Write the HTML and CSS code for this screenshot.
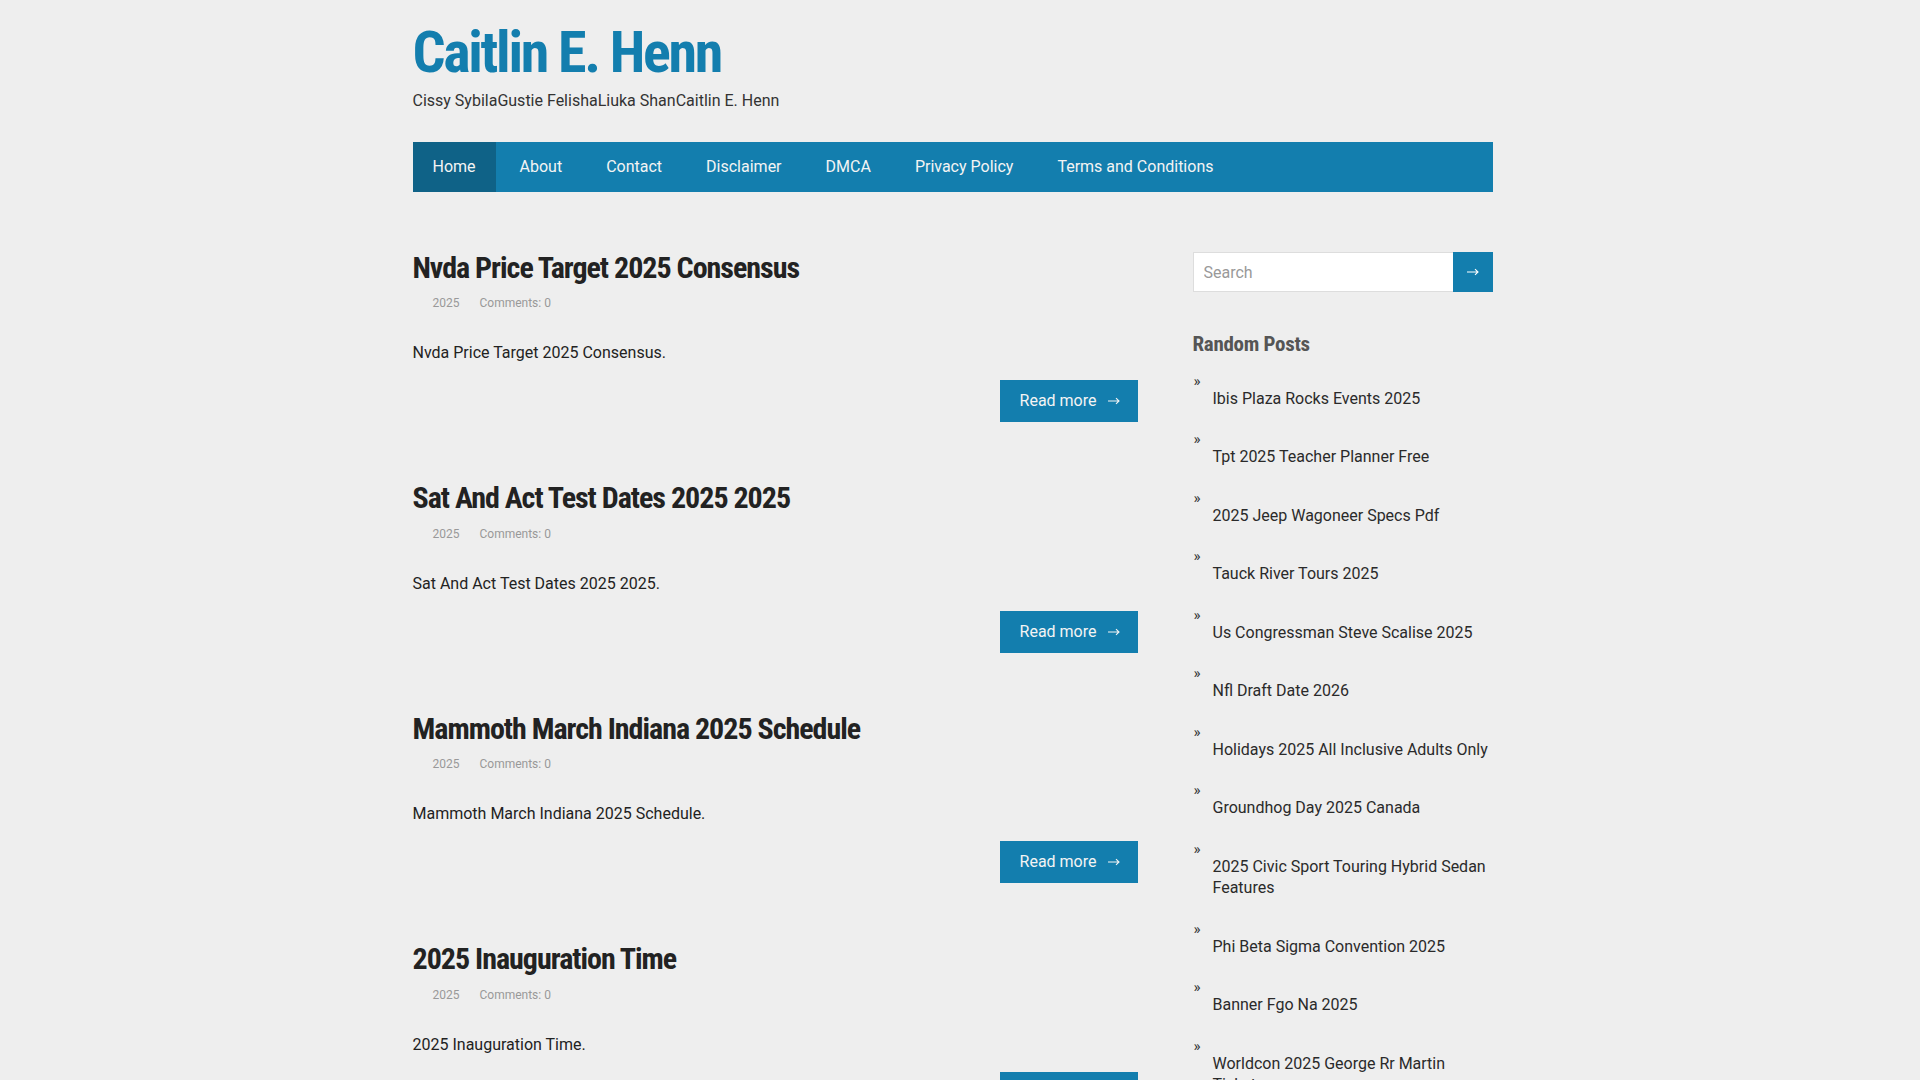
FILE: index.html
```html
<!DOCTYPE html>
<html lang="en">
<head>
<meta charset="utf-8">
<title>Caitlin E. Henn</title>
<link rel="stylesheet" href="styles.css">
</head>
<body>
<div class="wrap">
  <header class="site-header">
    <div class="site-title"><a href="#">Caitlin E. Henn</a></div>
    <div class="site-desc">Cissy SybilaGustie FelishaLiuka ShanCaitlin E. Henn</div>
  </header>
  <nav class="main-nav">
    <ul>
      <li class="active"><a href="#">Home</a></li>
      <li><a href="#">About</a></li>
      <li><a href="#">Contact</a></li>
      <li><a href="#">Disclaimer</a></li>
      <li><a href="#">DMCA</a></li>
      <li><a href="#">Privacy Policy</a></li>
      <li><a href="#">Terms and Conditions</a></li>
    </ul>
  </nav>
  <div class="content">
    <main class="posts">
      <article class="post">
        <h2 class="post-title"><a href="#">Nvda Price Target 2025 Consensus</a></h2>
        <div class="meta"><span class="date">2025</span><span class="comments">Comments: 0</span></div>
        <p class="excerpt">Nvda Price Target 2025 Consensus.</p>
        <div class="more-row"><a class="more" href="#">Read more<svg class="arrow" width="12" height="8" viewBox="0 0 12 8"><path d="M0 4H11M8 1.2L11 4L8 6.8" fill="none" stroke="currentColor" stroke-width="1.1"/></svg></a></div>
      </article>
      <article class="post">
        <h2 class="post-title"><a href="#">Sat And Act Test Dates 2025 2025</a></h2>
        <div class="meta"><span class="date">2025</span><span class="comments">Comments: 0</span></div>
        <p class="excerpt">Sat And Act Test Dates 2025 2025.</p>
        <div class="more-row"><a class="more" href="#">Read more<svg class="arrow" width="12" height="8" viewBox="0 0 12 8"><path d="M0 4H11M8 1.2L11 4L8 6.8" fill="none" stroke="currentColor" stroke-width="1.1"/></svg></a></div>
      </article>
      <article class="post">
        <h2 class="post-title"><a href="#">Mammoth March Indiana 2025 Schedule</a></h2>
        <div class="meta"><span class="date">2025</span><span class="comments">Comments: 0</span></div>
        <p class="excerpt">Mammoth March Indiana 2025 Schedule.</p>
        <div class="more-row"><a class="more" href="#">Read more<svg class="arrow" width="12" height="8" viewBox="0 0 12 8"><path d="M0 4H11M8 1.2L11 4L8 6.8" fill="none" stroke="currentColor" stroke-width="1.1"/></svg></a></div>
      </article>
      <article class="post">
        <h2 class="post-title"><a href="#">2025 Inauguration Time</a></h2>
        <div class="meta"><span class="date">2025</span><span class="comments">Comments: 0</span></div>
        <p class="excerpt">2025 Inauguration Time.</p>
        <div class="more-row"><a class="more" href="#">Read more<svg class="arrow" width="12" height="8" viewBox="0 0 12 8"><path d="M0 4H11M8 1.2L11 4L8 6.8" fill="none" stroke="currentColor" stroke-width="1.1"/></svg></a></div>
      </article>
      <article class="post">
        <h2 class="post-title"><a href="#">Nfl Draft Date 2026</a></h2>
        <div class="meta"><span class="date">2025</span><span class="comments">Comments: 0</span></div>
        <p class="excerpt">Nfl Draft Date 2026.</p>
        <div class="more-row"><a class="more" href="#">Read more<svg class="arrow" width="12" height="8" viewBox="0 0 12 8"><path d="M0 4H11M8 1.2L11 4L8 6.8" fill="none" stroke="currentColor" stroke-width="1.1"/></svg></a></div>
      </article>
      <article class="post">
        <h2 class="post-title"><a href="#">Groundhog Day 2025 Canada</a></h2>
        <div class="meta"><span class="date">2025</span><span class="comments">Comments: 0</span></div>
        <p class="excerpt">Groundhog Day 2025 Canada.</p>
        <div class="more-row"><a class="more" href="#">Read more<svg class="arrow" width="12" height="8" viewBox="0 0 12 8"><path d="M0 4H11M8 1.2L11 4L8 6.8" fill="none" stroke="currentColor" stroke-width="1.1"/></svg></a></div>
      </article>
    </main>
    <aside class="sidebar">
      <form class="search">
        <input class="search-input" type="text" placeholder="Search">
        <button class="search-btn" type="button"><svg width="12" height="8" viewBox="0 0 12 8"><path d="M0 4H11M8 1.2L11 4L8 6.8" fill="none" stroke="currentColor" stroke-width="1.1"/></svg></button>
      </form>
      <h3 class="widget-title">Random Posts</h3>
      <ul class="random">
        <li><a href="#">Ibis Plaza Rocks Events 2025</a></li>
        <li><a href="#">Tpt 2025 Teacher Planner Free</a></li>
        <li><a href="#">2025 Jeep Wagoneer Specs Pdf</a></li>
        <li><a href="#">Tauck River Tours 2025</a></li>
        <li><a href="#">Us Congressman Steve Scalise 2025</a></li>
        <li><a href="#">Nfl Draft Date 2026</a></li>
        <li><a href="#">Holidays 2025 All Inclusive Adults Only</a></li>
        <li><a href="#">Groundhog Day 2025 Canada</a></li>
        <li><a href="#">2025 Civic Sport Touring Hybrid Sedan Features</a></li>
        <li><a href="#">Phi Beta Sigma Convention 2025</a></li>
        <li><a href="#">Banner Fgo Na 2025</a></li>
        <li><a href="#">Worldcon 2025 George Rr Martin Tickets</a></li>
      </ul>
    </aside>
  </div>
</div>
</body>
</html>
```
FILE: styles.css
```css
* { box-sizing: border-box; }
html, body { margin: 0; padding: 0; }
body {
  background: #eeeeee;
  color: #222222;
  font-family: Roboto, "Liberation Sans", sans-serif;
  font-size: 16px;
  line-height: 22px;
  padding-right: 15px;
}
a { color: inherit; text-decoration: none; }
ul { list-style: none; margin: 0; padding: 0; }

.wrap {
  width: 1080px;
  margin: 0 auto;
}

.site-title, .post-title, .widget-title {
  font-family: "Roboto Condensed", "Liberation Sans Narrow", "DejaVu Sans Condensed", "Noto Sans", sans-serif;
  font-stretch: condensed;
  font-weight: 700;
}

/* header */
.site-header { padding-top: 23px; }
.site-title {
  font-size: 58px;
  line-height: 58px;
  color: #137eae;
  letter-spacing: -2.3px;
}
.site-desc {
  margin-top: 9px;
  color: #333333;
}

/* nav */
.main-nav {
  margin-top: 30px;
  background: #137eae;
}
.main-nav ul { display: flex; gap: 4px; }
.main-nav a {
  display: block;
  padding: 0 20px;
  line-height: 50px;
  color: #f4f4f4;
}
.main-nav .active a { background: #0f6287; }

/* content */
.content {
  display: flex;
  gap: 55px;
  padding-top: 54px;
}
.posts { width: 725px; }
.post { margin-bottom: 54.6px; }
.post-title {
  margin: 0;
  padding-top: 2.5px;
  font-size: 30px;
  line-height: 38px;
  letter-spacing: -1px;
  color: #222222;
}
.meta {
  margin-top: 7.5px;
  font-size: 12px;
  line-height: 18px;
  color: #999999;
}
.meta span { padding-left: 20px; }
.excerpt { margin: 30px 0 0; }
.more-row {
  display: flex;
  justify-content: flex-end;
  margin-top: 16px;
}
.more {
  display: flex;
  align-items: center;
  padding: 10px 18px 10px 20px;
  background: #137eae;
  color: #f4f4f4;
}
.more .arrow { margin-left: 11px; }

/* sidebar */
.sidebar { width: 300px; padding-top: 6px; }
.search { display: flex; height: 40px; }
.search-input {
  flex: 1;
  min-width: 0;
  height: 40px;
  border: 1px solid #dddddd;
  border-right: none;
  background: #ffffff;
  padding: 0 10px;
  font-family: Roboto, sans-serif;
  font-size: 16px;
  color: #333333;
  outline: none;
}
.search-input::placeholder { color: #999999; }
.search-btn {
  display: flex;
  align-items: center;
  justify-content: center;
  width: 40px;
  height: 40px;
  border: none;
  background: #137eae;
  color: #ffffff;
  padding: 0;
}
.widget-title {
  margin: 40px 0 0;
  font-size: 21px;
  line-height: 24px;
  letter-spacing: -0.3px;
  color: #555555;
}
.random { margin-top: 18px; }
.random li {
  padding-left: 20px;
  margin-bottom: 23.2px;
  line-height: 21.3px;
  color: #2a2a2a;
}
.random li::before {
  content: "»";
  display: block;
  margin-left: -19px;
  font-size: 15px;
  line-height: 14px;
  height: 14px;
  color: #333333;
}
```
